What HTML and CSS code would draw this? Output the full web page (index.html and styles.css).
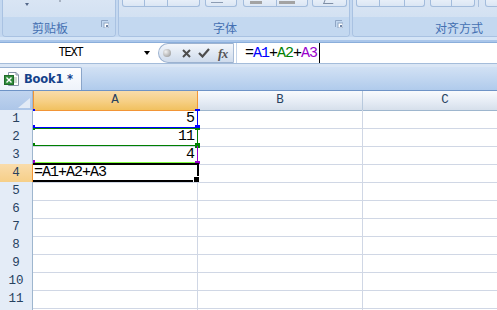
FILE: index.html
```html
<!DOCTYPE html>
<html lang="zh">
<head>
<meta charset="utf-8">
<title>Book1</title>
<link rel="stylesheet" href="styles.css">
</head>
<body>
<div class="ribbon">
  <div class="group g1">
    <div class="gbody">
      <span class="drop"></span><span class="dot"></span>
    </div>
    <div class="glabel">剪贴板
      <svg class="launcher" width="8" height="8" viewBox="0 0 8 8"><path d="M0.5 7V0.5H7" fill="none" stroke="#8ea5c4"/><rect x="3" y="3" width="5" height="5" fill="#fff" stroke="#8ea5c4" stroke-width="1"/><rect x="5" y="5" width="2" height="2" fill="#6f86a8"/></svg>
    </div>
  </div>
  <div class="group g2">
    <div class="gbody btnrow">
      <div class="bset s1"><span class="seg w23"></span><span class="seg w23"></span><span class="seg w32"></span></div>
      <div class="bset s2"><span class="seg w32"><i class="bar thin"></i></span></div>
      <div class="bset s3"><span class="seg w34"><i class="bar b12"></i></span><span class="seg w31"><i class="bar b16"></i></span></div>
      <div class="bset s4"><span class="seg w35"><i class="glyph"></i></span></div>
    </div>
    <div class="glabel">字体
      <svg class="launcher" width="8" height="8" viewBox="0 0 8 8"><path d="M0.5 7V0.5H7" fill="none" stroke="#8ea5c4"/><rect x="3" y="3" width="5" height="5" fill="#fff" stroke="#8ea5c4" stroke-width="1"/><rect x="5" y="5" width="2" height="2" fill="#6f86a8"/></svg>
    </div>
  </div>
  <div class="group g3">
    <div class="gbody btnrow">
      <div class="bset t1"><span class="seg w24"></span><span class="seg w25"></span><span class="seg w20"></span></div>
      <div class="bset t2"><span class="seg w22"></span><span class="seg w23"></span></div>
      <span class="vsep"></span>
      <div class="bset t3"><span class="seg w30"></span></div>
    </div>
    <div class="glabel">对齐方式</div>
  </div>
</div>

<div class="fbar">
  <div class="namebox">
    <span class="name">TEXT</span>
    <span class="nbarrow"></span>
  </div>
  <div class="pill">
    <span class="ball"></span>
    <svg class="ic-x" width="9" height="9" viewBox="0 0 9 9"><path d="M1 1L8 8M8 1L1 8" stroke="#4d4d4d" stroke-width="2"/></svg>
    <svg class="ic-ok" width="12" height="10" viewBox="0 0 12 10"><path d="M1 5L4.5 8.5L11 1" fill="none" stroke="#4d4d4d" stroke-width="2.2"/></svg>
    <span class="fx">fx</span>
  </div>
  <span class="fsep"></span>
  <div class="formula">=<span class="r1">A1</span>+<span class="r2">A2</span>+<span class="r3">A3</span><span class="caret"></span></div>
</div>

<div class="tabs">
  <div class="tab">
    <svg class="xlicon" width="16" height="16" viewBox="0 0 16 16">
      <path d="M4.5 1.5H12L14.5 4V14.5H4.5Z" fill="#fff" stroke="#8593a8"/>
      <path d="M12 1.5V4H14.5" fill="none" stroke="#8593a8"/>
      <rect x="0.5" y="4.5" width="9" height="9" fill="#2e8b3a" stroke="#1f6a29"/>
      <path d="M2.5 6.5L7.5 11.5M7.5 6.5L2.5 11.5" stroke="#fff" stroke-width="1.4"/>
      <path d="M10 7H13M10 9H13M10 11H13" stroke="#9bb59e"/>
    </svg>
    <span class="tabname">Book1 *</span>
  </div>
</div>

<div class="sheet">
  <div class="row hdr">
    <div class="corner"><svg width="12" height="10" viewBox="0 0 12 10"><path d="M12 0V10H0Z" fill="#e3ebf6"/></svg></div>
    <div class="ch sel">A</div>
    <div class="ch">B</div>
    <div class="ch">C</div>
  </div>
  <div class="row"><div class="rh">1</div><div class="c num">5</div><div class="c"></div><div class="c"></div></div>
  <div class="row"><div class="rh">2</div><div class="c num">11</div><div class="c"></div><div class="c"></div></div>
  <div class="row"><div class="rh">3</div><div class="c num">4</div><div class="c"></div><div class="c"></div></div>
  <div class="row"><div class="rh sel">4</div><div class="c txt">=A1+A2+A3</div><div class="c"></div><div class="c"></div></div>
  <div class="row"><div class="rh">5</div><div class="c"></div><div class="c"></div><div class="c"></div></div>
  <div class="row"><div class="rh">6</div><div class="c"></div><div class="c"></div><div class="c"></div></div>
  <div class="row"><div class="rh">7</div><div class="c"></div><div class="c"></div><div class="c"></div></div>
  <div class="row"><div class="rh">8</div><div class="c"></div><div class="c"></div><div class="c"></div></div>
  <div class="row"><div class="rh">9</div><div class="c"></div><div class="c"></div><div class="c"></div></div>
  <div class="row"><div class="rh">10</div><div class="c"></div><div class="c"></div><div class="c"></div></div>
  <div class="row"><div class="rh">11</div><div class="c"></div><div class="c"></div><div class="c"></div></div>
  <div class="row last"><div class="rh"></div><div class="c"></div><div class="c"></div><div class="c"></div></div>

  <!-- reference range borders -->
  <div class="rng blue">
    <span class="ln rt"></span><span class="ln bt"></span>
    <span class="hd tl"></span><span class="hd tr"></span><span class="hd bl"></span><span class="hd br"></span>
  </div>
  <div class="rng green">
    <span class="ln tp"></span><span class="ln rt"></span><span class="ln bt"></span>
    <span class="hd tl"></span><span class="hd tr"></span><span class="hd bl"></span><span class="hd br"></span>
  </div>
  <div class="rng purple">
    <span class="ln rt"></span><span class="ln bt lime"></span>
    <span class="hd bl"></span><span class="hd br"></span>
  </div>
  <div class="active"><span class="fill"></span></div>
</div>
</body>
</html>
```

FILE: styles.css
```css
* { box-sizing: border-box; margin: 0; padding: 0; }
html, body { width: 497px; height: 310px; overflow: hidden; background: #fff; }
body { font-family: "Liberation Mono", monospace; color: #000; }

/* ---------- ribbon ---------- */
.ribbon {
  height: 43px;
  display: flex;
  align-items: flex-start;
  gap: 2px;
  padding-left: 2px;
  overflow: hidden;
  background: linear-gradient(#c4d8f0 0, #c4d8f0 37px, #d5e5f7 37px, #d5e5f7 40px, #aac6ea 40px, #aac6ea 42px, #8aaedb 42px);
}
.group {
  flex: none;
  height: 37px;
  display: flex;
  flex-direction: column;
  border: 1px solid #a9c2e2;
  border-top: 0;
  border-radius: 0 0 4px 4px;
  overflow: hidden;
}
.g1 { width: 114px; }
.g2 { width: 232px; }
.g3 { width: 232px; }
.gbody {
  height: 17px;
  background: linear-gradient(#d9e5f4, #d3e1f2);
  position: relative;
}
.glabel {
  height: 19px;
  padding: 2px 18px 0 0;
  text-align: center;
  font: 12px/17px "Noto Sans CJK SC", sans-serif;
  color: #4470b2;
  background: #c3d8f0;
  position: relative;
}
.launcher { position: absolute; right: 6px; top: 3px; }

.drop {
  position: absolute; left: 22px; top: 3px;
  width: 0; height: 0;
  border-left: 2.5px solid transparent;
  border-right: 2.5px solid transparent;
  border-top: 3px solid #55698a;
}
.dot {
  position: absolute; left: 56px; top: 0;
  width: 2px; height: 2px; background: #a7b2c2;
}

.btnrow { display: flex; align-items: flex-start; }
.bset { display: flex; height: 8px; margin-top: -1px; }
.seg {
  height: 8px;
  border: 1px solid #a3bcdc;
  border-top: 0;
  background: linear-gradient(#e9f0f9, #dbe6f4);
  position: relative;
}
.seg + .seg { border-left: 0; }
.seg:first-child { border-bottom-left-radius: 3px; }
.seg:last-child { border-bottom-right-radius: 3px; }
.w20 { width: 20px; } .w22 { width: 22px; } .w23 { width: 23px; } .w24 { width: 24px; }
.w25 { width: 25px; } .w30 { width: 30px; } .w31 { width: 31px; } .w32 { width: 32px; }
.w34 { width: 34px; } .w35 { width: 35px; }
.s1 { margin-left: 3px; }
.s2 { margin-left: 5px; }
.s3 { margin-left: 6px; }
.s4 { margin-left: 4px; }
.t1 { margin-left: 3px; }
.t2 { margin-left: 5px; }
.t3 { margin-left: 6px; }
.vsep { width: 1px; height: 7px; background: #a9bfdc; margin-left: 3px; }
.bar { position: absolute; top: 2px; height: 3px; background: #a3a3a3; }
.b12 { left: 6px; width: 12px; }
.b16 { left: 2px; width: 16px; }
.thin { left: 5px; width: 12px; height: 1px; top: 3px; background: #8c9cb3; }
.glyph { position: absolute; left: 11px; top: 0; width: 10px; height: 5px; border-bottom: 1px solid #7f8fa6; border-left: 1px solid #7f8fa6; transform: skewX(-20deg); }

/* ---------- formula bar ---------- */
.fbar { height: 20px; display: flex; align-items: stretch; background: #fff; }
.namebox { width: 155px; display: flex; align-items: center; }
.name {
  flex: 1;
  text-align: center;
  font-size: 12px;
  letter-spacing: -1.2px;
  padding-left: 2px;
}
.nbarrow {
  width: 16px; height: 4px;
  display: flex; justify-content: center;
}
.nbarrow::before {
  content: "";
  width: 0; height: 0;
  border-left: 3.5px solid transparent;
  border-right: 3.5px solid transparent;
  border-top: 4px solid #000;
}
.pill {
  margin-left: 3px;
  width: 76px;
  border: 1px solid #9cb2d0;
  border-right-color: #a9bcd6;
  border-radius: 10px 0 0 10px;
  background: linear-gradient(#f3f6fb, #dde6f2 60%, #cfdbec);
  display: flex;
  align-items: center;
  padding-left: 4px;
}
.ball {
  width: 8px; height: 8px; border-radius: 50%;
  background: radial-gradient(circle at 35% 35%, #f2f2f2, #b5b5b5 60%, #8e8e8e);
}
.ic-x { margin-left: 11px; }
.ic-ok { margin-left: 7px; }
.fx {
  margin-left: 8px;
  font: italic bold 13px/1 "Liberation Serif", serif;
  color: #555;
  letter-spacing: -0.5px;
}
.fsep { width: 1px; margin-left: 2px; background: #c5d5ea; }
.formula {
  padding-left: 8px;
  display: flex;
  align-items: center;
  font-size: 15px;
  letter-spacing: -1px;
}
.r1 { color: #0000ff; }
.r2 { color: #008000; }
.r3 { color: #9900cc; }
.caret { width: 1px; height: 20px; background: #000; margin-left: 2px; }

/* ---------- sheet tabs ---------- */
.tabs {
  height: 28px;
  border-top: 1px solid #a4bcda;
  border-bottom: 1px solid #6e93c6;
  padding-top: 3px;
  display: flex;
  background: linear-gradient(#dae6f5 0, #dae6f5 3px, #d2e1f4 3px, #b0cbec);
}
.tab {
  width: 82px;
  height: 23px;
  border-top: 1px solid #9ab2d2;
  border-right: 1px solid #8aa5c9;
  border-top-right-radius: 2px;
  background: linear-gradient(#fdfeff, #eef3fa);
  display: flex;
  align-items: center;
  padding-left: 4px;
}
.xlicon { flex: none; }
.tabname {
  margin-left: 4px;
  font: bold 11.5px "DejaVu Sans", sans-serif;
  color: #15428b;
  letter-spacing: -0.2px;
}

/* ---------- grid ---------- */
.sheet { position: relative; width: 497px; height: 219px; overflow: hidden; }
.row {
  display: grid;
  grid-template-columns: 33px 165px 165px 165px;
  height: 18px;
}
.row.hdr { height: 19px; }
.corner {
  background: linear-gradient(#c0d4ef, #adc6e8);
  border-right: 1px solid #9eb6ce;
  border-bottom: 1px solid #9eb6ce;
  display: flex; align-items: flex-end; justify-content: flex-end;
  padding: 0 2px 2px 0;
}
.ch {
  background: linear-gradient(#f9fbfd, #e6ecf5 55%, #d6dfeb);
  border-right: 1px solid #b8c9dd;
  border-bottom: 1px solid #9eb6ce;
  text-align: center;
  font-size: 12.5px;
  line-height: 19px;
  color: #27415f;
}
.ch.sel {
  background: linear-gradient(#f9dcaa, #f6cf84 55%, #f1c15f);
  border-right-color: #f29536;
  border-bottom-color: #f29536;
  box-shadow: inset 1px 0 0 #f29536;
}
.rh {
  background: #e4ecf7;
  border-right: 1px solid #9eb6ce;
  border-bottom: 1px solid #9eb6ce;
  text-align: center;
  font-size: 12.5px;
  line-height: 18px;
  color: #27415f;
}
.rh.sel {
  background: linear-gradient(#f9dcac, #f6cf88);
  border-right-color: #f29536;
  border-bottom-color: #f29536;
}
.c {
  border-right: 1px solid #d0d7e5;
  border-bottom: 1px solid #d0d7e5;
  font-size: 15px;
  letter-spacing: -1px;
  line-height: 17px;
  white-space: nowrap;
}
.c.num { text-align: right; padding-right: 3px; }
.c.txt { padding-left: 1px; }

/* range reference outlines (overlay) */
.rng { position: absolute; left: 33px; width: 165px; height: 18px; }
.rng .ln { position: absolute; background: currentColor; }
.rng .tp { left: 0; top: 0; width: 165px; height: 1px; }
.rng .bt { left: 0; bottom: 0; width: 165px; height: 1px; }
.rng .rt { right: 0; top: 0; width: 1px; height: 100%; }
.rng .hd { position: absolute; background: currentColor; }
.rng .tl { left: 0; top: 0; width: 2px; height: 2px; }
.rng .bl { left: 0; bottom: 0; width: 2px; height: 3px; }
.rng .tr { right: -2px; top: 0; width: 5px; height: 2px; }
.rng .br { right: -2px; bottom: -2px; width: 5px; height: 5px; }
.blue { color: #0000ff; top: 18px; height: 19px; }
.green { color: #008000; top: 37px; height: 18px; }
.purple { color: #9900cc; top: 55px; height: 17px; }
.purple .lime { background: #80ff40; }
.purple .br { bottom: -1px; height: 3px; }

.active {
  position: absolute;
  left: 33px; top: 72px;
  width: 166px; height: 19px;
  border-top: 2px solid #000;
  border-right: 2px solid #000;
  border-bottom: 2px solid #000;
}
.fill {
  position: absolute;
  right: -2px; bottom: -2px;
  width: 6px; height: 6px;
  background: #000;
  border-top: 1px solid #fff;
  border-left: 1px solid #fff;
}
```
